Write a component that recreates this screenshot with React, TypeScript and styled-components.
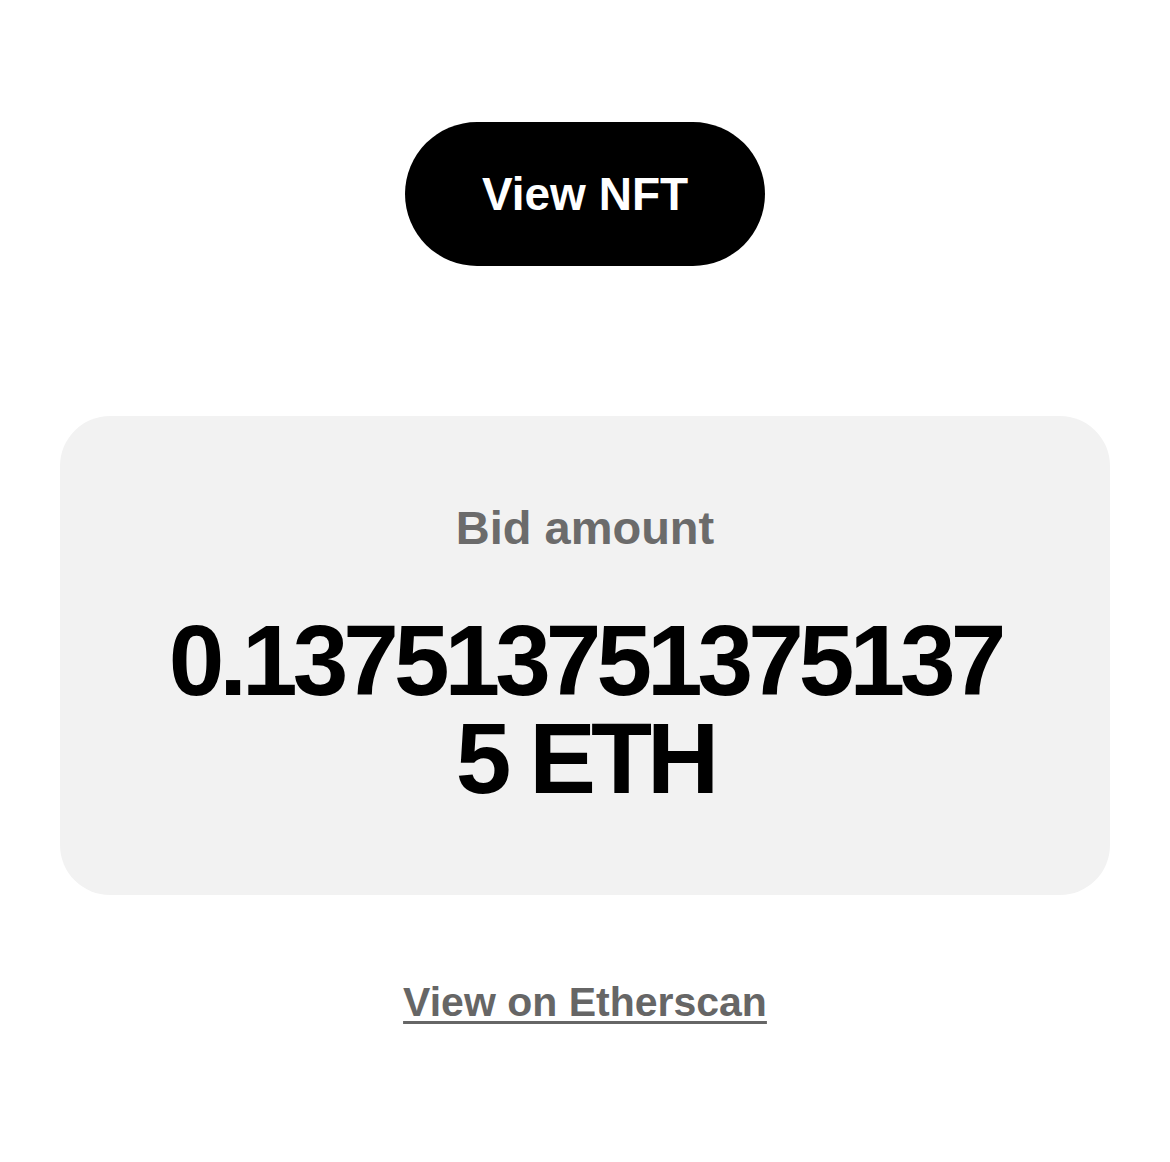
import styled, { createGlobalStyle } from "styled-components";

const GlobalStyle = createGlobalStyle`
  body {
    margin: 0;
    background: #fff;
    font-family: "Liberation Sans", Arial, sans-serif;
  }
`;

const Page = styled.div`
  display: flex;
  flex-direction: column;
  align-items: center;
  padding: 122px 60px 80px;
`;

const PillButton = styled.button`
  display: flex;
  align-items: center;
  justify-content: center;
  width: 360px;
  height: 144px;
  border: none;
  border-radius: 72px;
  background: #000;
  color: #fff;
  font-family: inherit;
  font-size: 46px;
  font-weight: 700;
  line-height: 1;
  cursor: pointer;
`;

const AmountCard = styled.div`
  box-sizing: border-box;
  width: 1050px;
  margin-top: 150px;
  padding: 84px 96px 88px;
  border-radius: 50px;
  background: #f2f2f2;
  text-align: center;
`;

const CardLabel = styled.div`
  color: #6b6b6b;
  font-size: 47px;
  font-weight: 700;
  line-height: 1.2;
`;

const AmountValue = styled.div`
  margin-top: 55px;
  color: #000;
  font-size: 100px;
  font-weight: 700;
  line-height: 98px;
  letter-spacing: -5px;
  word-break: break-all;
`;

const ScanLink = styled.a`
  margin-top: 83px;
  color: #666;
  font-size: 41px;
  font-weight: 700;
  line-height: 1.2;
  text-decoration: underline;
  text-decoration-thickness: 3px;
  text-underline-offset: 5px;
  cursor: pointer;
`;

const App = () => {
  const bid = { amount: "0.1375137513751375", currency: "ETH" };

  return (
    <>
      <GlobalStyle />
      <Page>
        <PillButton>View NFT</PillButton>
        <AmountCard>
          <CardLabel>Bid amount</CardLabel>
          <AmountValue>
            {bid.amount} {bid.currency}
          </AmountValue>
        </AmountCard>
        <ScanLink>View on Etherscan</ScanLink>
      </Page>
    </>
  );
};

export default App;
